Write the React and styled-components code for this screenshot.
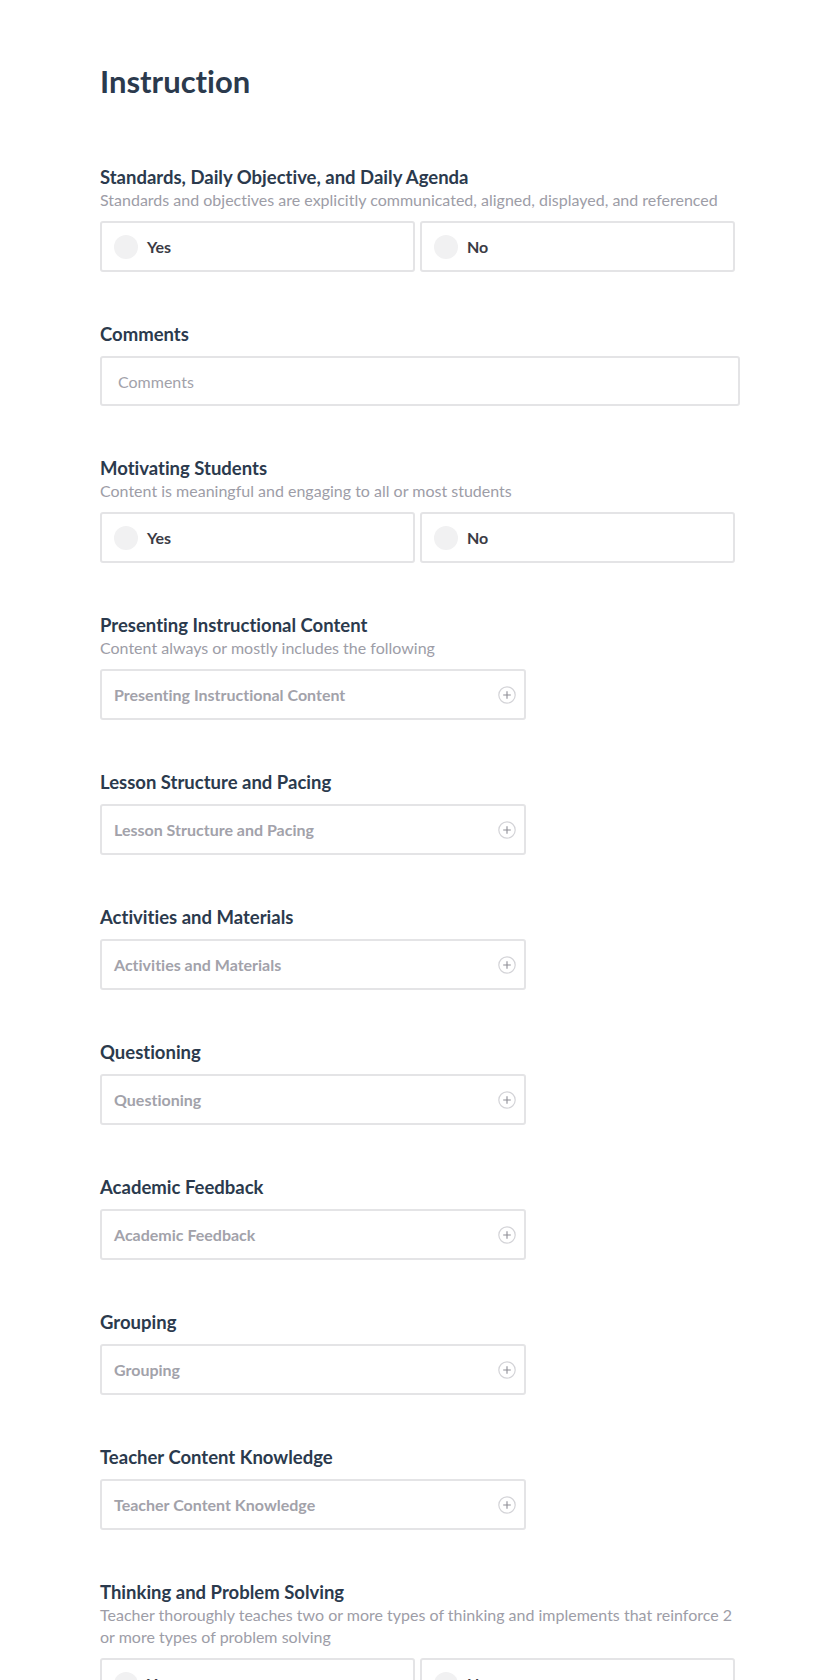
import styled, { createGlobalStyle } from "styled-components"

const GlobalStyle = createGlobalStyle`
body{
    margin: 0;
    background: #ffffff;
    font-family: Lato, "Noto Sans", sans-serif;
    font-variant-ligatures: none;
}
`

const Page = styled.div`
padding: 63px 100px 40px 100px;
width: 640px;
`

const Title = styled.h1`
margin: 0 0 66px 0;
font-size: 31px;
line-height: 36px;
font-weight: 700;
color: #2b3a4d;
`

const Section = styled.section`
margin-bottom: 50px;
`

const Label = styled.h2`
margin: 0;
font-size: 18.5px;
line-height: 24px;
font-weight: 700;
color: #2b3a4d;
`

const Description = styled.p`
margin: 0;
font-size: 16px;
line-height: 22px;
color: #9d9da7;
`

const Field = styled.div`
margin-top: 10px;
`

const RadioRow = styled.div`
display: flex;
`

const RadioBox = styled.label`
display: flex;
align-items: center;
box-sizing: border-box;
width: calc(50% - 5px);
height: 51px;
margin-right: 5px;
padding-left: 12px;
border: 2px solid #e4e4e6;
border-radius: 3px;
cursor: pointer;
font-size: 16px;
font-weight: 700;
color: #3b3b45;
`

const Dot = styled.span`
width: 24px;
height: 24px;
border-radius: 50%;
background: #f1f1f2;
margin-right: 9px;
flex-shrink: 0;
`

const TextInput = styled.input`
display: block;
box-sizing: border-box;
width: 100%;
height: 50px;
padding: 0 16px;
border: 2px solid #e4e4e6;
border-radius: 3px;
font-family: Lato, "Noto Sans", sans-serif;
font-size: 16px;
color: #3b3b45;
outline: none;
&::placeholder{
    color: #a2a2aa;
}
`

const Select = styled.div`
display: flex;
align-items: center;
justify-content: space-between;
box-sizing: border-box;
width: 426px;
height: 51px;
padding: 0 8px 0 12px;
border: 2px solid #e4e4e6;
border-radius: 3px;
font-size: 16px;
font-weight: 700;
color: #a2a2aa;
cursor: pointer;
`

const PlusIcon = () => (
    <svg width="18" height="18" viewBox="0 0 18 18" fill="none">
        <circle cx="9" cy="9" r="8.2" stroke="#d4d4d8" strokeWidth="1.2" />
        <path d="M9 5.2v7.6M5.2 9h7.6" stroke="#8e8e96" strokeWidth="1.1" />
    </svg>
)

function YesNo(){
    return(
        <RadioRow>
            <RadioBox><Dot />Yes</RadioBox>
            <RadioBox><Dot />No</RadioBox>
        </RadioRow>
    )
}

const sections = [
    { label: "Standards, Daily Objective, and Daily Agenda", desc: "Standards and objectives are explicitly communicated, aligned, displayed, and referenced", type: "radio" },
    { label: "Comments", type: "input" },
    { label: "Motivating Students", desc: "Content is meaningful and engaging to all or most students", type: "radio" },
    { label: "Presenting Instructional Content", desc: "Content always or mostly includes the following", type: "select" },
    { label: "Lesson Structure and Pacing", type: "select" },
    { label: "Activities and Materials", type: "select" },
    { label: "Questioning", type: "select" },
    { label: "Academic Feedback", type: "select" },
    { label: "Grouping", type: "select" },
    { label: "Teacher Content Knowledge", type: "select" },
    { label: "Thinking and Problem Solving", desc: "Teacher thoroughly teaches two or more types of thinking and implements that reinforce 2 or more types of problem solving", type: "radio" },
]

export default function App(){
    const items = sections.map((s)=>{
        return (
            <Section key={s.label}>
                <Label>{s.label}</Label>
                {s.desc && <Description>{s.desc}</Description>}
                <Field>
                    {s.type === "radio" && <YesNo />}
                    {s.type === "input" && <TextInput placeholder="Comments" />}
                    {s.type === "select" && (
                        <Select>
                            <span>{s.label}</span>
                            <PlusIcon />
                        </Select>
                    )}
                </Field>
            </Section>
        )
    })

    return(
        <Page>
            <GlobalStyle />
            <Title>Instruction</Title>
            {items}
        </Page>
    )
}
